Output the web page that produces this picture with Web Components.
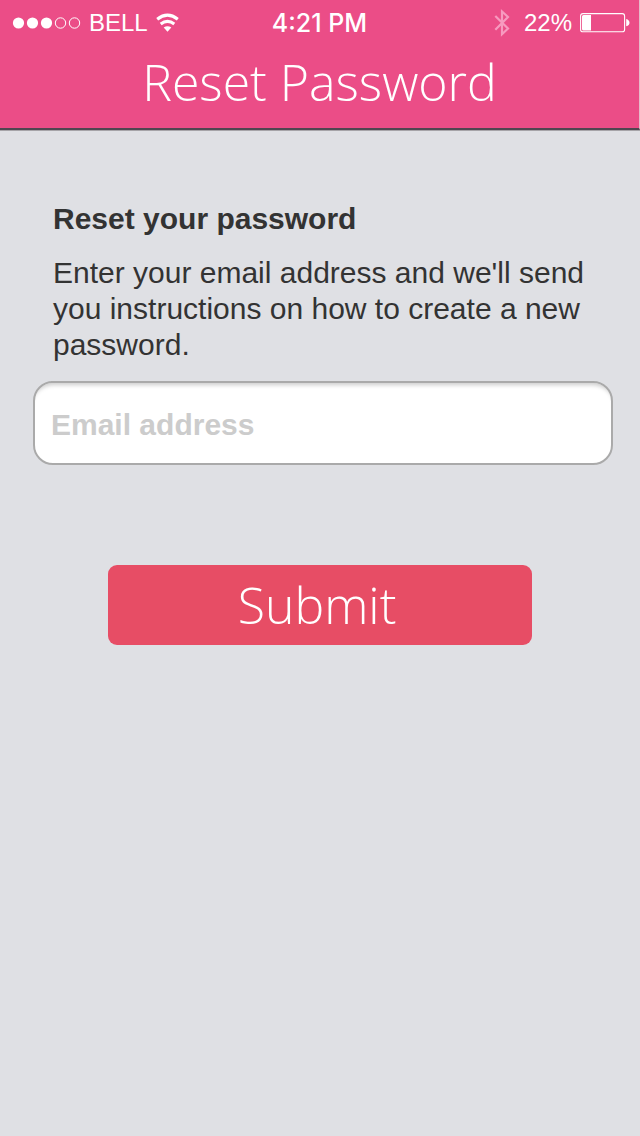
<!DOCTYPE html>
<html lang="en">
<head>
<meta charset="utf-8">
<meta name="viewport" content="width=device-width, initial-scale=1">
<title>Reset Password</title>
<style>
html, body { margin: 0; background: #dfe0e4; }
body { min-height: 100vh; font-family: "Liberation Sans", Arial, sans-serif; color: #333; }
</style>
</head>
<body>
<reset-screen></reset-screen>
<script>
const define = (name, html, setup) => {
  const template = document.createElement('template');
  template.innerHTML = html;
  customElements.define(name, class extends HTMLElement {
    constructor() {
      super();
      this.attachShadow({ mode: 'open' }).append(template.content.cloneNode(true));
      if (setup) setup(this);
    }
  });
};

define('status-bar', `
<style>
:host { display: grid; grid-template-columns: 1fr auto 1fr; align-items: center; height: 46px; padding: 0 9px; color: #fff; font-size: 24px; line-height: 28px; }
.left, .right { display: flex; align-items: center; }
.left { gap: 8px; padding-left: 3px; }
.right { justify-content: flex-end; gap: 8px; }
time { font-family: Inter, sans-serif; font-weight: 500; font-size: 25px; }
.right span { padding-left: 6px; }
svg { display: block; flex: none; }
</style>
<div class="left">
  <svg width="69" height="12" viewBox="0 0 69 12" fill="#fff" stroke="#fff"><g stroke="none"><circle cx="6.5" cy="6" r="5.6"/><circle cx="20.5" cy="6" r="5.6"/><circle cx="34.5" cy="6" r="5.6"/></g><g fill="none"><circle cx="48.5" cy="6" r="5.2"/><circle cx="62.5" cy="6" r="5.2"/></g></svg>
  <span>BELL</span>
  <svg width="24" height="20" viewBox="1 0 24 20" fill="none" stroke="#fff" stroke-width="3.1"><path d="M2.200 6.200Q12.500-1.900 22.800 6.200"/><path d="M5.700 11Q12.500 5.800 19.300 11"/><path d="M8.700 14.500Q12.500 12 16.300 14.500L12.500 18.800z" fill="#fff" stroke="none"/></svg>
</div>
<time>4:21 PM</time>
<div class="right">
  <svg width="16" height="28" viewBox="0 0 16 28" fill="none" stroke="#f79abf" stroke-width="2.2"><path d="M1.300 7 14 19.500 8 25.200V2.500L14 8 1.300 20.700"/></svg>
  <span>22%</span>
  <svg width="50" height="20" viewBox="0 0 50 20" fill="#fff"><rect x=".6" y=".6" width="44" height="18.2" rx="2.4" fill="none" stroke="#fff" stroke-width="1.1"/><path d="M2 3.500Q2 2 3.500 2H11v15.500H3.500Q2 17.500 2 16zM46.200 6Q49.500 7 49.500 9.700T46.200 13.300z"/></svg>
</div>`);

define('app-header', `
<style>
:host { display: block; background: #eb4d87; border-right: 1px solid #e6b8c8; border-bottom: 2px solid #504650; box-shadow: 0 1px 0 #a6a4a8; }
h1 { margin: 0; padding-bottom: 10px; text-align: center; color: #fff; font: 300 50px/72px "Open Sans", sans-serif; }
</style>
<slot name="status"></slot>
<h1><slot></slot></h1>`);

define('intro-text', `
<style>
:host { display: block; padding: 0 20px; font-size: 30px; line-height: 36px; }
h2 { margin: 0 0 18px; font-size: 30px; line-height: 36px; }
p { margin: 0; }
</style>
<h2><slot name="heading"></slot></h2>
<p><slot></slot></p>`);

define('text-field', `
<style>
:host { display: block; }
input { display: block; box-sizing: border-box; width: 100%; height: 84px; padding: 4px 16px 0; border: 2px solid #aaa; border-radius: 20px; background: #fff; box-shadow: inset 0 6px 4px -4px #ccc; color: #333; font: bold 30px/36px "Liberation Sans", Arial, sans-serif; }
input::placeholder { color: #ccc; opacity: 1; }
</style>
<input type="email" name="email" autocomplete="email">`, host => {
  const input = host.shadowRoot.querySelector('input');
  input.placeholder = 'Email address';
  input.setAttribute('aria-label', 'Email address');
});

define('submit-button', `
<style>
:host { display: block; }
button { display: block; width: 100%; height: 80px; margin: 0; padding: 0 6px 0 0; border: 0; border-radius: 9px; background: #e74d65; color: #fff; font: 300 50px/80px "Open Sans", sans-serif; }
</style>
<button type="submit"><slot></slot></button>`);

define('reset-screen', `
<style>
:host { display: block; }
form { display: block; padding: 71px 27px 70px 33px; }
text-field { margin-top: 18px; }
submit-button { margin: 100px 81px 0 75px; }
</style>
<app-header><status-bar slot="status"></status-bar>Reset Password</app-header>
<main><form>
  <intro-text><span slot="heading">Reset your password</span>Enter your email address and we'll send you instructions on how to create a new password.</intro-text>
  <text-field></text-field>
  <submit-button>Submit</submit-button>
</form></main>`);
</script>
</body>
</html>
